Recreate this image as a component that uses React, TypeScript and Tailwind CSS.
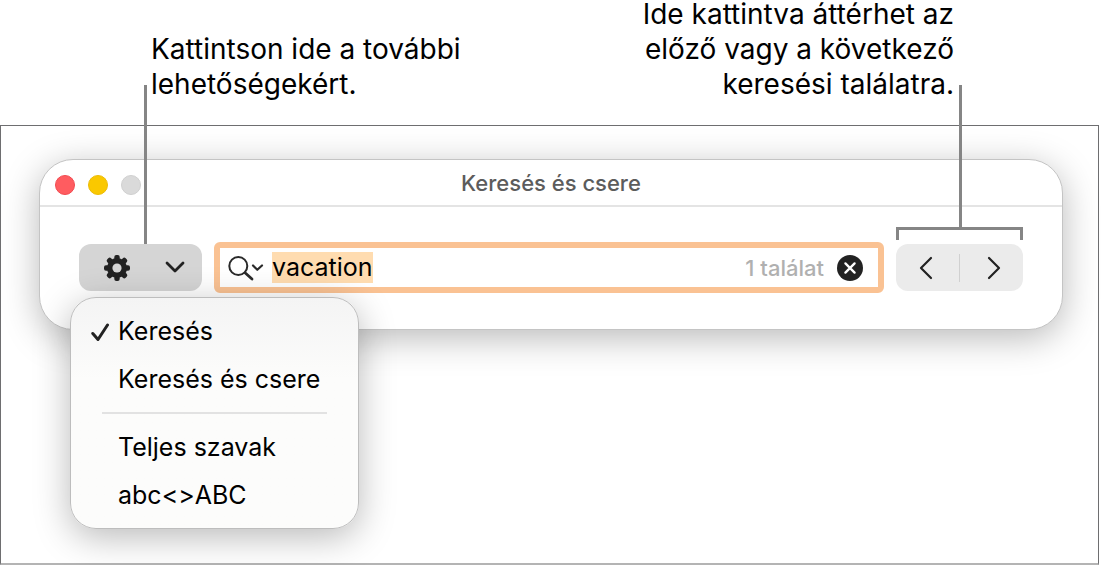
import type { ReactNode } from "react";

function GearIcon() {
  return (
    <svg viewBox="0 0 26 26" className="size-[26px]" aria-hidden="true">
      <g fill="#222">
        {[0, 45, 90, 135].map((angle) => (
          <rect key={angle} x="10.3" y="0" width="5.4" height="26" rx="2" transform={`rotate(${angle} 13 13)`} />
        ))}
        <circle cx="13" cy="13" r="10" />
      </g>
      <circle cx="13" cy="13" r="4.6" fill="#d5d5d5" />
    </svg>
  );
}

function Stroke({ d, box, className, width }: { d: string; box: string; className: string; width: number }) {
  return (
    <svg
      viewBox={box}
      className={className}
      fill="none"
      stroke="#222"
      strokeWidth={width}
      strokeLinecap="round"
      strokeLinejoin="round"
      aria-hidden="true"
    >
      <path d={d} />
    </svg>
  );
}

function SearchIcon() {
  return (
    <svg viewBox="0 0 36 26" className="h-[26px] w-9 shrink-0" fill="none" stroke="#2a2a2a" strokeLinecap="round" strokeLinejoin="round" aria-hidden="true">
      <circle cx="10.3" cy="11" r="9" strokeWidth="2" />
      <path d="M17.3 18 L24 24" strokeWidth="2.8" />
      <path d="M25 10.5 L29.3 14.8 L34 10.5" strokeWidth="2.2" />
    </svg>
  );
}

function MenuItem({ children, checked = false }: { children: ReactNode; checked?: boolean }) {
  return (
    <button type="button" role="menuitemradio" aria-checked={checked} className="flex h-12 w-full items-center pl-5 text-left">
      <span className="w-[27px] shrink-0">
        {checked && <Stroke d="M1.8 10.5 L7 16.5 L16.5 2" box="0 0 19 19" className="size-[19px]" width={3} />}
      </span>
      {children}
    </button>
  );
}

export default function App() {
  return (
    <div className="bg-white pr-0.5 font-['Inter','Liberation_Sans',sans-serif] text-black">
      <header className="relative z-0 flex h-[125px] items-end justify-between bg-white pr-[145px] pb-[23px] pl-[151px] text-[28px] leading-[35px]">
        <p>
          Kattintson ide a további
          <br />
          lehetőségekért.
        </p>
        <p className="text-right">
          Ide kattintva áttérhet az
          <br />
          előző vagy a következő
          <br />
          keresési találatra.
        </p>
      </header>

      <main className="min-h-[440px] border border-b-2 border-[#6e6e70] border-b-[#b4b4b4] pt-[33px] pr-[35px] pb-8 pl-[38px]">
        <section className="rounded-[34px] border border-[#c4c4c4] bg-white shadow-[0_8px_36px_rgba(0,0,0,0.28)]">
          <div className="grid h-[47px] grid-cols-[1fr_auto_1fr] items-center border-b-2 border-[#e4e4e4] px-[15px]">
            <div className="flex gap-[13px] pt-1">
              <button type="button" aria-label="Bezárás" className="size-5 rounded-full border border-[#f24a50] bg-[#ff5c60]" />
              <button type="button" aria-label="Kis méret" className="size-5 rounded-full border border-[#edbc05] bg-[#fac800]" />
              <button type="button" aria-label="Nagyítás" className="size-5 rounded-full border border-[#d0d0d0] bg-[#dadada]" />
            </div>
            <h1 className="text-[22px] leading-7 font-medium text-[#5c5c5c]">Keresés és csere</h1>
          </div>

          <div className="flex items-center gap-3 rounded-b-[34px] px-[39px] pt-[35px] pb-9">
            <div className="relative">
              <button type="button" aria-label="További lehetőségek" className="flex h-[47px] w-[123px] items-center justify-between rounded-xl bg-[#d5d5d5] pr-[17px] pl-[25px]">
                <GearIcon />
                <Stroke d="M2 2 L10 10 L18 2" box="0 0 20 13" className="h-[13px] w-5" width={2.8} />
              </button>
              <div className="absolute bottom-full left-[65px] z-10 h-[159px] w-[3px] bg-[#858585]" />
              <div role="menu" className="absolute top-[53px] left-[-9px] z-20 w-[289px] rounded-[26px] border border-[#bdbdbd] bg-linear-to-b from-[#f4f4f4] to-[#fcfcfb] to-35% pt-[10px] pb-2 text-[25px] shadow-[0_8px_36px_rgba(0,0,0,0.28)]">
                <MenuItem checked>Keresés</MenuItem>
                <MenuItem>Keresés és csere</MenuItem>
                <hr className="mx-[31px] mt-2 mb-[10px] border-t-2 border-[#e2e2e2]" />
                <MenuItem>Teljes szavak</MenuItem>
                <MenuItem>abc&lt;&gt;ABC</MenuItem>
              </div>
            </div>

            <div className="flex h-[51px] min-w-0 flex-1 items-center rounded-md border-6 border-[#fac293] bg-white pr-[15px] pl-2">
              <label htmlFor="query" aria-label="Keresés">
                <SearchIcon />
              </label>
              <input id="query" defaultValue="vacation" className="ml-2 h-[31px] field-sizing-content bg-[#ffdcb0] text-[25px] outline-none" />
              <span className="mr-[13px] ml-auto pt-0.5 text-[22px] font-medium text-[#b0b0b0]">1 találat</span>
              <button type="button" aria-label="Törlés">
                <svg viewBox="0 0 26 26" className="size-[26px]" aria-hidden="true">
                  <circle cx="13" cy="13" r="13" fill="#222" />
                  <path d="M8.4 8.4 L17.6 17.6 M17.6 8.4 L8.4 17.6" stroke="#fff" strokeWidth="2.3" strokeLinecap="round" />
                </svg>
              </button>
            </div>

            <div className="relative flex h-[47px] w-[127px] items-center rounded-xl bg-[#ebebeb]">
              <button type="button" aria-label="Előző találat" className="flex h-full flex-1 items-center justify-center pr-1">
                <Stroke d="M12 2 L2 12 L12 22" box="0 0 14 24" className="h-6 w-[14px]" width={2.2} />
              </button>
              <div className="h-7 w-px bg-[#d0d0d0]" />
              <button type="button" aria-label="Következő találat" className="flex h-full flex-1 items-center justify-center pl-1">
                <Stroke d="M2 2 L12 12 L2 22" box="0 0 14 24" className="h-6 w-[14px]" width={2.2} />
              </button>
              <div className="absolute bottom-[51px] left-0 z-10 h-[13px] w-full border-3 border-b-0 border-[#858585]" />
              <div className="absolute bottom-16 left-[63px] z-10 h-[142px] w-[3px] bg-[#858585]" />
            </div>
          </div>
        </section>
      </main>
    </div>
  );
}
